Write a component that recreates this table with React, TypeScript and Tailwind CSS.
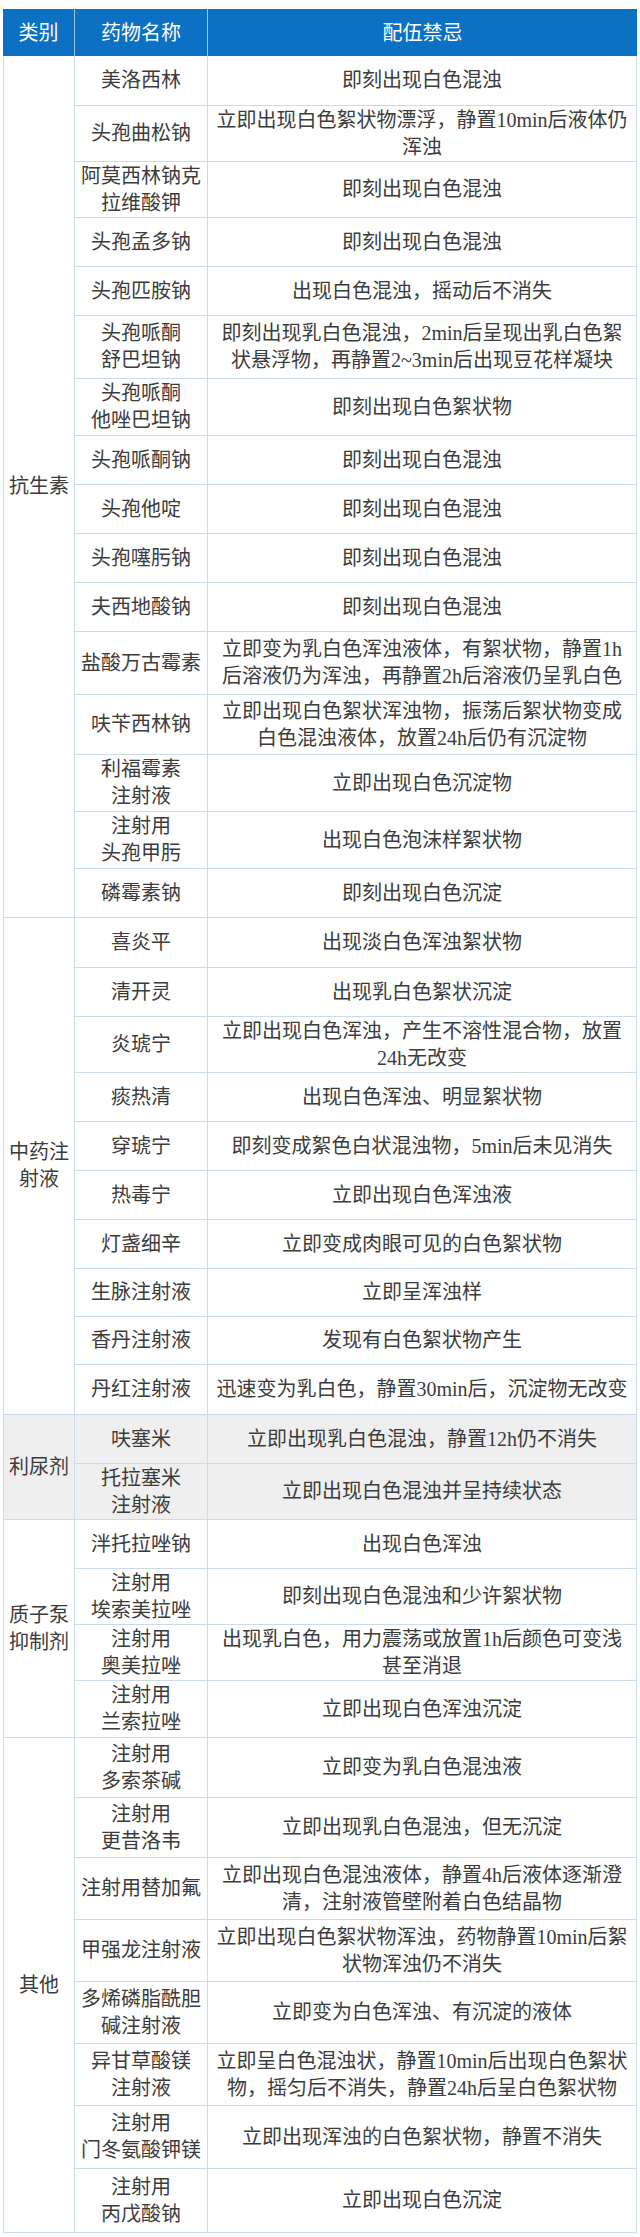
type Row = { name: string[]; text: string[]; h: string }
type Group = { cat: string[]; bg: string; rows: Row[] }

const groups: Group[] = [
  {
    cat: ['抗生素'],
    bg: 'bg-white',
    rows: [
      { name: ['美洛西林'], text: ['即刻出现白色混浊'], h: 'h-[50px]' },
      { name: ['头孢曲松钠'], text: ['立即出现白色絮状物漂浮，静置10min后液体仍', '浑浊'], h: 'h-[56px]' },
      { name: ['阿莫西林钠克', '拉维酸钾'], text: ['即刻出现白色混浊'], h: 'h-[56px]' },
      { name: ['头孢孟多钠'], text: ['即刻出现白色混浊'], h: 'h-[49px]' },
      { name: ['头孢匹胺钠'], text: ['出现白色混浊，摇动后不消失'], h: 'h-[49px]' },
      { name: ['头孢哌酮', '舒巴坦钠'], text: ['即刻出现乳白色混浊，2min后呈现出乳白色絮', '状悬浮物，再静置2~3min后出现豆花样凝块'], h: 'h-[63px]' },
      { name: ['头孢哌酮', '他唑巴坦钠'], text: ['即刻出现白色絮状物'], h: 'h-[57px]' },
      { name: ['头孢哌酮钠'], text: ['即刻出现白色混浊'], h: 'h-[49px]' },
      { name: ['头孢他啶'], text: ['即刻出现白色混浊'], h: 'h-[49px]' },
      { name: ['头孢噻肟钠'], text: ['即刻出现白色混浊'], h: 'h-[49px]' },
      { name: ['夫西地酸钠'], text: ['即刻出现白色混浊'], h: 'h-[49px]' },
      { name: ['盐酸万古霉素'], text: ['立即变为乳白色浑浊液体，有絮状物，静置1h', '后溶液仍为浑浊，再静置2h后溶液仍呈乳白色'], h: 'h-[63px]' },
      { name: ['呋苄西林钠'], text: ['立即出现白色絮状浑浊物，振荡后絮状物变成', '白色混浊液体，放置24h后仍有沉淀物'], h: 'h-[60px]' },
      { name: ['利福霉素', '注射液'], text: ['立即出现白色沉淀物'], h: 'h-[57px]' },
      { name: ['注射用', '头孢甲肟'], text: ['出现白色泡沫样絮状物'], h: 'h-[57px]' },
      { name: ['磷霉素钠'], text: ['即刻出现白色沉淀'], h: 'h-[48px]' },
    ],
  },
  {
    cat: ['中药注', '射液'],
    bg: 'bg-white',
    rows: [
      { name: ['喜炎平'], text: ['出现淡白色浑浊絮状物'], h: 'h-[50px]' },
      { name: ['清开灵'], text: ['出现乳白色絮状沉淀'], h: 'h-[49px]' },
      { name: ['炎琥宁'], text: ['立即出现白色浑浊，产生不溶性混合物，放置', '24h无改变'], h: 'h-[56px]' },
      { name: ['痰热清'], text: ['出现白色浑浊、明显絮状物'], h: 'h-[49px]' },
      { name: ['穿琥宁'], text: ['即刻变成絮色白状混浊物，5min后未见消失'], h: 'h-[49px]' },
      { name: ['热毒宁'], text: ['立即出现白色浑浊液'], h: 'h-[49px]' },
      { name: ['灯盏细辛'], text: ['立即变成肉眼可见的白色絮状物'], h: 'h-[49px]' },
      { name: ['生脉注射液'], text: ['立即呈浑浊样'], h: 'h-[48px]' },
      { name: ['香丹注射液'], text: ['发现有白色絮状物产生'], h: 'h-[48px]' },
      { name: ['丹红注射液'], text: ['迅速变为乳白色，静置30min后，沉淀物无改变'], h: 'h-[49px]' },
    ],
  },
  {
    cat: ['利尿剂'],
    bg: 'bg-[#efefef]',
    rows: [
      { name: ['呋塞米'], text: ['立即出现乳白色混浊，静置12h仍不消失'], h: 'h-[49px]' },
      { name: ['托拉塞米', '注射液'], text: ['立即出现白色混浊并呈持续状态'], h: 'h-[55px]' },
    ],
  },
  {
    cat: ['质子泵', '抑制剂'],
    bg: 'bg-white',
    rows: [
      { name: ['泮托拉唑钠'], text: ['出现白色浑浊'], h: 'h-[49px]' },
      { name: ['注射用', '埃索美拉唑'], text: ['即刻出现白色混浊和少许絮状物'], h: 'h-[56px]' },
      { name: ['注射用', '奥美拉唑'], text: ['出现乳白色，用力震荡或放置1h后颜色可变浅', '甚至消退'], h: 'h-[56px]' },
      { name: ['注射用', '兰索拉唑'], text: ['立即出现白色浑浊沉淀'], h: 'h-[56px]' },
    ],
  },
  {
    cat: ['其他'],
    bg: 'bg-white',
    rows: [
      { name: ['注射用', '多索茶碱'], text: ['立即变为乳白色混浊液'], h: 'h-[60px]' },
      { name: ['注射用', '更昔洛韦'], text: ['立即出现乳白色混浊，但无沉淀'], h: 'h-[60px]' },
      { name: ['注射用替加氟'], text: ['立即出现白色混浊液体，静置4h后液体逐渐澄', '清，注射液管壁附着白色结晶物'], h: 'h-[62px]' },
      { name: ['甲强龙注射液'], text: ['立即出现白色絮状物浑浊，药物静置10min后絮', '状物浑浊仍不消失'], h: 'h-[62px]' },
      { name: ['多烯磷脂酰胆', '碱注射液'], text: ['立即变为白色浑浊、有沉淀的液体'], h: 'h-[62px]' },
      { name: ['异甘草酸镁', '注射液'], text: ['立即呈白色混浊状，静置10min后出现白色絮状', '物，摇匀后不消失，静置24h后呈白色絮状物'], h: 'h-[62px]' },
      { name: ['注射用', '门冬氨酸钾镁'], text: ['立即出现浑浊的白色絮状物，静置不消失'], h: 'h-[63px]' },
      { name: ['注射用', '丙戊酸钠'], text: ['立即出现白色沉淀'], h: 'h-[63px]' },
    ],
  },
]

function Lines({ lines }: { lines: string[] }) {
  return (
    <div className="flex flex-col items-center leading-[27px]">
      {lines.map((l, i) => (
        <span key={i} className="whitespace-nowrap">
          {l}
        </span>
      ))}
    </div>
  )
}

export default function App() {
  return (
    <div
      className="min-h-screen bg-white pt-[9px] pl-[3px] text-[20px] text-[#3c3c3c]"
      style={{ fontFamily: '"Liberation Serif", "Noto Sans CJK SC", serif' }}
    >
      <div className="w-[634px]">
        {/* Header */}
        <div className="flex h-[47px] bg-[#0c71c3] text-white">
          <div className="flex w-[72px] items-center justify-center border-r border-[#9cc4e8]">类别</div>
          <div className="flex w-[133px] items-center justify-center border-r border-[#9cc4e8]">药物名称</div>
          <div className="flex flex-1 items-center justify-center">配伍禁忌</div>
        </div>

        {/* Body */}
        <div className="border-x border-[#c9dbec]">
          {groups.map((g, gi) => (
            <div key={gi} className={`flex border-b border-[#c9dbec] ${g.bg}`}>
              <div className="flex w-[71px] items-center justify-center border-r border-[#c9dbec]">
                <Lines lines={g.cat} />
              </div>
              <div className="flex flex-1 flex-col">
                {g.rows.map((r, ri) => (
                  <div
                    key={ri}
                    className={`flex ${r.h} ${ri < g.rows.length - 1 ? 'border-b border-[#c9dbec]' : ''}`}
                  >
                    <div className="flex w-[133px] items-center justify-center border-r border-[#c9dbec]">
                      <Lines lines={r.name} />
                    </div>
                    <div className="flex flex-1 items-center justify-center px-[4px]">
                      <Lines lines={r.text} />
                    </div>
                  </div>
                ))}
              </div>
            </div>
          ))}
        </div>
      </div>
    </div>
  )
}
